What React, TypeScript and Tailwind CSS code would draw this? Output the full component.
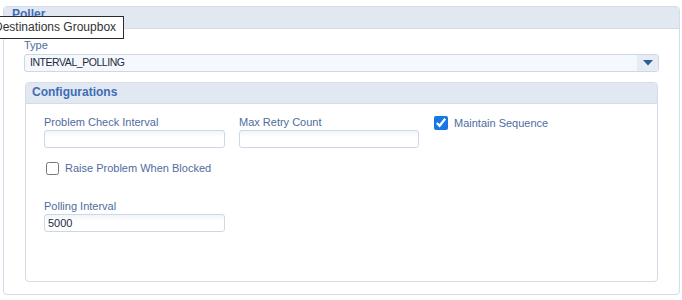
import React from "react";

const label = "text-[11px] leading-[13px] text-[#4f6c9e]";
const inputCls =
  "h-[18px] rounded-[3px] border border-[#cdd8e6] bg-gradient-to-b from-[#f1f4f8] to-white to-[40%] px-[3px] text-[11px] leading-[16px] text-[#1d2b3c] outline-none";

export default function App() {
  return (
    <div
      className="relative w-[682px] h-[300px] bg-white overflow-hidden"
      style={{ fontFamily: '"Liberation Sans", Arial, sans-serif' }}
    >
      <div className="ml-[3px] mt-[6px] w-[677px] h-[289px] rounded-[4px] border border-[#d3dce8] flex flex-col">
        <div className="h-[22px] bg-[#e1e8f2] border-b border-[#d3dce8] rounded-t-[3px] px-[8px] pt-0 text-[12px] leading-[14px] font-bold text-[#3f6db5]">
          Poller
        </div>
        <div className="flex flex-col pl-[20px] pr-[20px] pt-[10px]">
          <div className={label}>Type</div>
          <div className="mt-[2px] flex h-[18px] w-[635px] items-center rounded-[3px] border border-[#cdd8e6] bg-[#f5f8fc]">
            <div className="flex-1 pl-[5px] text-[10.5px] tracking-[-0.45px] text-[#1d2b3c]">INTERVAL_POLLING</div>
            <div className="flex h-full w-[21px] items-center justify-center rounded-r-[3px] bg-[#e6ecf4]">
              <svg width="10" height="6" viewBox="0 0 10 6">
                <path d="M0 0 H10 L5 5.5 Z" fill="#2f5d95" />
              </svg>
            </div>
          </div>
          <div className="mt-[10px] ml-[1px] w-[633px] h-[200px] rounded-[4px] border border-[#d3dce8] flex flex-col">
            <div className="h-[21px] bg-[#e1e8f2] border-b border-[#d3dce8] rounded-t-[3px] px-[6px] pt-0 text-[12px] leading-[18px] font-bold text-[#3f6db5]">
              Configurations
            </div>
            <div className="flex flex-col pl-[18px] pt-[12px]">
              <div className="flex">
                <div className="flex w-[195px] flex-col">
                  <div className={label}>Problem Check Interval</div>
                  <input className={inputCls + " mt-[1px] w-[181px]"} />
                </div>
                <div className="flex w-[195px] flex-col">
                  <div className={label}>Max Retry Count</div>
                  <input className={inputCls + " mt-[1px] w-[180px]"} />
                </div>
                <label className="flex items-center gap-[6px] h-[14px]">
                  <input type="checkbox" defaultChecked className="m-0 h-[14px] w-[14px] accent-[#1976e6]" />
                  <span className={label}>Maintain Sequence</span>
                </label>
              </div>
              <label className="mt-[13px] ml-[2px] flex items-center gap-[6px] h-[14px]">
                <input type="checkbox" className="m-0 h-[13px] w-[13px]" />
                <span className={label}>Raise Problem When Blocked</span>
              </label>
              <div className="mt-[25px] flex flex-col">
                <div className={label}>Polling Interval</div>
                <input className={inputCls + " mt-[1px] w-[181px]"} defaultValue="5000" />
              </div>
            </div>
          </div>
        </div>
      </div>
      <div className="absolute left-[-12px] top-[16px] h-[23px] border border-[#2b2b2b] bg-white pl-[5px] pr-[7px] text-[12px] leading-[21px] text-[#333]">
        Destinations Groupbox
      </div>
    </div>
  );
}
